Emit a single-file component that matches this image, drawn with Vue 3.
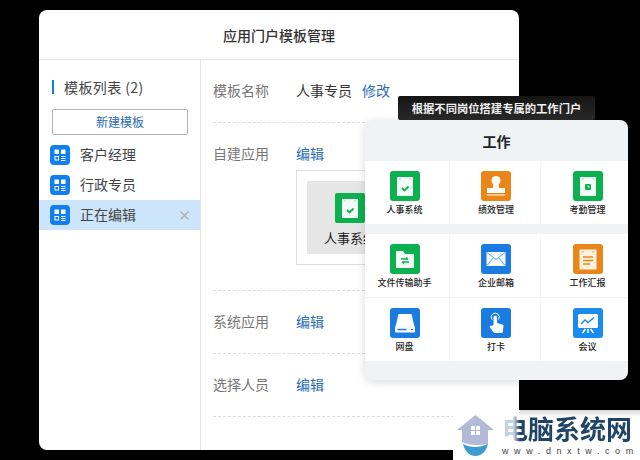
<script setup>
const templates = [
  { name: '客户经理' },
  { name: '行政专员' },
  { name: '正在编辑', active: true }
]

const rows = [
  { apps: [{ name: '人事系统', bg: '#0cb04f', icon: 'check' }, { name: '绩效管理', bg: '#e8861a', icon: 'stamp' }, { name: '考勤管理', bg: '#0cb04f', icon: 'clock' }] },
  { apps: [{ name: '文件传输助手', bg: '#0cb04f', icon: 'folder' }, { name: '企业邮箱', bg: '#1a7be0', icon: 'mail' }, { name: '工作汇报', bg: '#e8861a', icon: 'report' }] },
  { apps: [{ name: '网盘', bg: '#1a7be0', icon: 'disk' }, { name: '打卡', bg: '#1a7be0', icon: 'touch' }, { name: '会议', bg: '#1a8cf0', icon: 'meeting' }] }
]
</script>

<template>
  <div class="page">
    <div class="window">
      <div class="win-title">应用门户模板管理</div>
      <div class="win-body">
        <aside class="side">
          <div class="side-title">模板列表 (2)</div>
          <button class="new-btn">新建模板</button>
          <div class="side-list">
            <div v-for="t in templates" :key="t.name" class="side-item" :class="{ active: t.active }">
              <svg class="tpl-icon" width="20" height="20" viewBox="0 0 20 20">
                <rect width="20" height="20" rx="4" fill="#1080f0" />
                <rect x="4.500" y="4.500" width="4.500" height="4.500" rx="0.500" fill="#fff" />
                <rect x="11" y="4.500" width="4.500" height="4.500" rx="0.500" fill="#fff" />
                <rect x="5" y="11.500" width="3.500" height="3.500" fill="none" stroke="#fff" />
                <path d="M11 11.500h4.500M11 13.500h4.500M11 15.500h4.500" stroke="#fff" />
              </svg>
              <span class="item-name">{{ t.name }}</span>
              <svg v-if="t.active" class="close" width="9" height="9" viewBox="0 0 9 9">
                <path d="M.5.5l8 8M8.500.5l-8 8" stroke="#a3aeb8" stroke-width="1.200" />
              </svg>
            </div>
          </div>
        </aside>

        <main class="main">
          <section class="row row-name">
            <span class="label">模板名称</span>
            <span class="value">人事专员</span>
            <a class="link">修改</a>
          </section>
          <section class="row row-custom">
            <div class="row-head">
              <span class="label">自建应用</span>
              <a class="link">编辑</a>
            </div>
            <div class="app-box">
              <div class="app-tile">
                <svg width="30" height="30" viewBox="0 0 30 30">
                  <rect width="30" height="30" rx="2" fill="#0cb04f" />
                  <rect x="7" y="6" width="16" height="19" fill="#f2fbf5" />
                  <path d="M10 7.500v1M20 7.500v1" stroke="#6a9" />
                  <path d="M12 17l2.500 2.500 4-4" fill="none" stroke="#0cb04f" stroke-width="1.800" />
                </svg>
                <span class="tile-name">人事系统</span>
              </div>
            </div>
          </section>
          <section class="row row-simple">
            <span class="label">系统应用</span>
            <a class="link">编辑</a>
          </section>
          <section class="row row-simple">
            <span class="label">选择人员</span>
            <a class="link">编辑</a>
          </section>
        </main>
      </div>
    </div>

    <div class="tip">根据不同岗位搭建专属的工作门户</div>

    <div class="work">
      <div class="work-title">工作</div>
      <div v-for="(row, i) in rows" :key="i" class="work-row" :class="'work-row-' + i">
        <div v-for="app in row.apps" :key="app.name" class="work-app">
          <svg width="30" height="30" viewBox="0 0 30 30">
            <rect width="30" height="30" rx="3" :fill="app.bg" />
            <template v-if="app.icon === 'check'">
              <rect x="7" y="6" width="16" height="19" fill="#f2fbf5" />
              <path d="M10 7.500v1M20 7.500v1" stroke="#6a9" />
              <path d="M12 17l2.500 2.500 4-4" fill="none" stroke="#0cb04f" stroke-width="1.800" />
            </template>
            <template v-else-if="app.icon === 'stamp'">
              <circle cx="15" cy="9.500" r="4.500" fill="#fff" />
              <path d="M12.500 12h5l.5 5h6v5H6v-5h6z" fill="#fff" />
              <path d="M6 24h18" stroke="#fbd9a8" stroke-width="1.500" />
            </template>
            <template v-else-if="app.icon === 'clock'">
              <rect x="7" y="6" width="16" height="19" fill="#f2fbf5" />
              <path d="M10 7.500v1M20 7.500v1" stroke="#6a9" />
              <rect x="12" y="13" width="6" height="6" rx="1" fill="#0cb04f" />
              <path d="M15 14.500V16h1.500" fill="none" stroke="#fff" />
            </template>
            <template v-else-if="app.icon === 'folder'">
              <path d="M6 7h7l2 3h9v14H6z" fill="#f2fbf5" />
              <path d="M11 15h7M18 15l-2-1.500M19 18h-7M12 18l2 1.500" fill="none" stroke="#0cb04f" stroke-width="1.300" />
            </template>
            <template v-else-if="app.icon === 'mail'">
              <rect x="5.500" y="8" width="19" height="14" fill="#f4f9ff" />
              <path d="M6 8.500l9 7 9-7M6 21.500l6.500-8M24 21.500l-6.500-8" fill="none" stroke="#5ea3ea" />
            </template>
            <template v-else-if="app.icon === 'report'">
              <rect x="6.500" y="5.500" width="17" height="20" fill="#fdf1dd" />
              <path d="M10 7v1.500M20 7v1.500" stroke="#c88" />
              <path d="M10 13h10M10 16.500h10M10 20h7" stroke="#e8861a" stroke-width="1.300" />
            </template>
            <template v-else-if="app.icon === 'disk'">
              <path d="M8.500 6h13l3 13H5.500z" fill="#fff" />
              <rect x="5" y="18" width="20" height="6.500" rx="1" fill="#fff" />
              <path d="M7.500 21.500h9" stroke="#1a7be0" stroke-width="1.500" />
              <path d="M21 21.500h2" stroke="#1a7be0" />
            </template>
            <template v-else-if="app.icon === 'touch'">
              <path d="M12.500 17V9.500a1.800 1.800 0 0 1 3.600 0V15l5.200 1.400a1.500 1.500 0 0 1 1.200 1.700L21.500 25H13l-4-5.500c-.8-1.200.6-2.500 1.800-1.600z" fill="#fff" />
              <path d="M11 11.500a4 4 0 1 1 6.500 0" fill="none" stroke="#fff" />
            </template>
            <template v-else>
              <rect x="5" y="6" width="20" height="14" rx="1.500" fill="#fff" />
              <path d="M8 16l4-4 3 2.500 6-5" fill="none" stroke="#1a8cf0" stroke-width="1.500" />
              <path d="M15 21v4M12.500 21l-3 4M17.500 21l3 4" stroke="#fff" stroke-width="1.500" />
            </template>
          </svg>
          <span class="app-name">{{ app.name }}</span>
        </div>
      </div>
      <div class="work-foot"></div>
    </div>

    <div class="mark">
      <svg class="house" width="37" height="41" viewBox="0 0 37 41">
        <path d="M18.500 0L0 15h5v12c6 3 14 4 26 2V15h6z" fill="#b3bad8" />
        <rect x="14" y="11" width="9" height="9" fill="#fff" />
        <path d="M18.500 11v9M14 15.500h9" stroke="#b3bad8" stroke-width="1.200" />
        <path d="M6 29c8 4 16 4 25 0-2 8-7 12-12.500 12S8 37 6 29z" fill="#3c9bd0" />
      </svg>
      <div class="mark-text">
        <div class="mark-title">电脑系统网</div>
        <div class="mark-url">www.dnxtw.com</div>
      </div>
    </div>
  </div>
</template>

<style>
html,
body {
  margin: 0;
  background: #000;
}
</style>

<style scoped>
.page {
  position: relative;
  width: 640px;
  height: 460px;
  box-sizing: border-box;
  padding: 10px 121px 10px 39px;
  background: #000;
  overflow: hidden;
  font-family: "Noto Sans CJK SC", "Noto Sans", sans-serif;
}

.window {
  height: 440px;
  background: #fff;
  border-radius: 8px;
  display: flex;
  flex-direction: column;
  overflow: hidden;
}

.win-title {
  height: 50px;
  flex: none;
  box-sizing: border-box;
  border-bottom: 1px solid #e2e5e8;
  display: flex;
  align-items: center;
  justify-content: center;
  font-size: 14px;
  font-weight: 500;
  color: #333;
}

.win-body {
  flex: 1;
  display: flex;
}

/* left list */
.side {
  width: 162px;
  flex: none;
  box-sizing: border-box;
  border-right: 1px solid #e2e5e8;
  padding-top: 20px;
}

.side-title {
  margin-left: 13px;
  height: 14px;
  padding-left: 10px;
  border-left: 2px solid #1080e0;
  font-size: 14px;
  line-height: 14px;
  letter-spacing: 0.4px;
  color: #444;
}

.new-btn {
  display: block;
  box-sizing: border-box;
  width: 136px;
  height: 26px;
  margin: 15px 0 5px 13px;
  padding: 0 0 2px;
  background: #fff;
  border: 1px solid #b0b4b8;
  border-radius: 2px;
  font-family: inherit;
  font-size: 12px;
  color: #2a6db5;
}

.side-item {
  height: 30px;
  display: flex;
  align-items: center;
  padding: 0 11px;
  font-size: 14px;
  color: #444;
}

.side-item.active {
  background: #cce5fb;
}

.item-name {
  flex: 1;
  margin: 0 0 2px 10px;
}

/* right form */
.main {
  flex: 1;
  padding: 0 0 0 12px;
  font-size: 14px;
}

.row {
  box-sizing: border-box;
  border-bottom: 1px dashed #ddd;
}

.row-name {
  height: 63px;
  display: flex;
  align-items: center;
  padding-bottom: 2px;
}

.row-custom {
  height: 168px;
  padding-top: 20px;
}

.row-simple {
  height: 63px;
  display: flex;
  align-items: center;
  padding-bottom: 2px;
}

.row-head {
  display: flex;
  align-items: center;
  height: 20px;
}

.label {
  width: 83px;
  flex: none;
  color: #777;
}

.value {
  color: #333;
  margin-right: 10px;
}

.link {
  color: #2a6db5;
}

.app-box {
  box-sizing: border-box;
  width: 180px;
  height: 95px;
  margin: 7px 0 0 83px;
  padding: 10px;
  border: 1px solid #ddd;
}

.app-tile {
  width: 86px;
  height: 73px;
  background: #e6e6e6;
  display: flex;
  flex-direction: column;
  align-items: center;
  padding-top: 12px;
  box-sizing: border-box;
}

.tile-name {
  margin-top: 5px;
  font-size: 13px;
  color: #222;
  white-space: nowrap;
}

/* floating panel */
.tip {
  position: absolute;
  left: 398px;
  top: 96px;
  width: 197px;
  height: 24px;
  background: linear-gradient(#151515, #2a2a2a);
  color: #f0f0f0;
  font-size: 11.3px;
  font-weight: 700;
  line-height: 24px;
  text-align: center;
  border-radius: 2px;
}

.tip::after {
  content: "";
  position: absolute;
  left: 93px;
  bottom: -4px;
  border-left: 5px solid transparent;
  border-right: 5px solid transparent;
  border-top: 5px solid #2a2a2a;
}

.work {
  position: absolute;
  left: 365px;
  top: 120px;
  width: 263px;
  height: 260px;
  background: #f0f3f6;
  border-radius: 8px;
  box-shadow: 0 2px 10px rgba(0, 0, 0, 0.15);
  overflow: hidden;
}

.work-title {
  height: 41px;
  box-sizing: border-box;
  padding-top: 1px;
  display: flex;
  align-items: center;
  justify-content: center;
  font-size: 14px;
  font-weight: 700;
  color: #222;
}

.work-row {
  display: grid;
  grid-template-columns: 85px 91px 87px;
  height: 63px;
  background: #f5f6f8;
}

.work-row-0 {
  margin-bottom: 10px;
}

.work-row-1 {
  margin-bottom: 1px;
}

.work-app {
  background: #fff;
  display: flex;
  flex-direction: column;
  align-items: center;
  padding-top: 10px;
  box-sizing: border-box;
  margin-right: 1px;
}

/* icons sit a little off the cell centre in the outer columns */
.work-app:first-child {
  padding-right: 5px;
}

.work-app:nth-child(2) {
  padding-left: 2px;
}

.work-app:last-child {
  margin-right: 0;
  padding-left: 6px;
}

.app-name {
  margin-top: 3px;
  font-size: 9px;
  font-weight: 500;
  line-height: 12px;
  color: #222;
  white-space: nowrap;
}

/* watermark */
.mark {
  position: absolute;
  left: 453px;
  top: 410px;
  width: 187px;
  height: 50px;
  background: linear-gradient(to bottom, rgba(255, 255, 255, 0.85), #fff 14%);
  display: flex;
}

.house {
  flex: none;
  margin: 5px 0 0 4px;
}

.mark-text {
  margin-left: 8px;
}

.mark-title {
  font-size: 26px;
  font-weight: 700;
  line-height: 30px;
  margin-top: 3px;
  color: transparent;
  background: linear-gradient(to right, #c4d2e0 12px, #1f4468 18px);
  -webkit-background-clip: text;
  background-clip: text;
  white-space: nowrap;
}

.mark-url {
  font-family: "Liberation Sans", sans-serif;
  font-size: 9px;
  line-height: 11px;
  letter-spacing: 5.6px;
  color: #444;
  white-space: nowrap;
  margin-top: 3px;
}
</style>
